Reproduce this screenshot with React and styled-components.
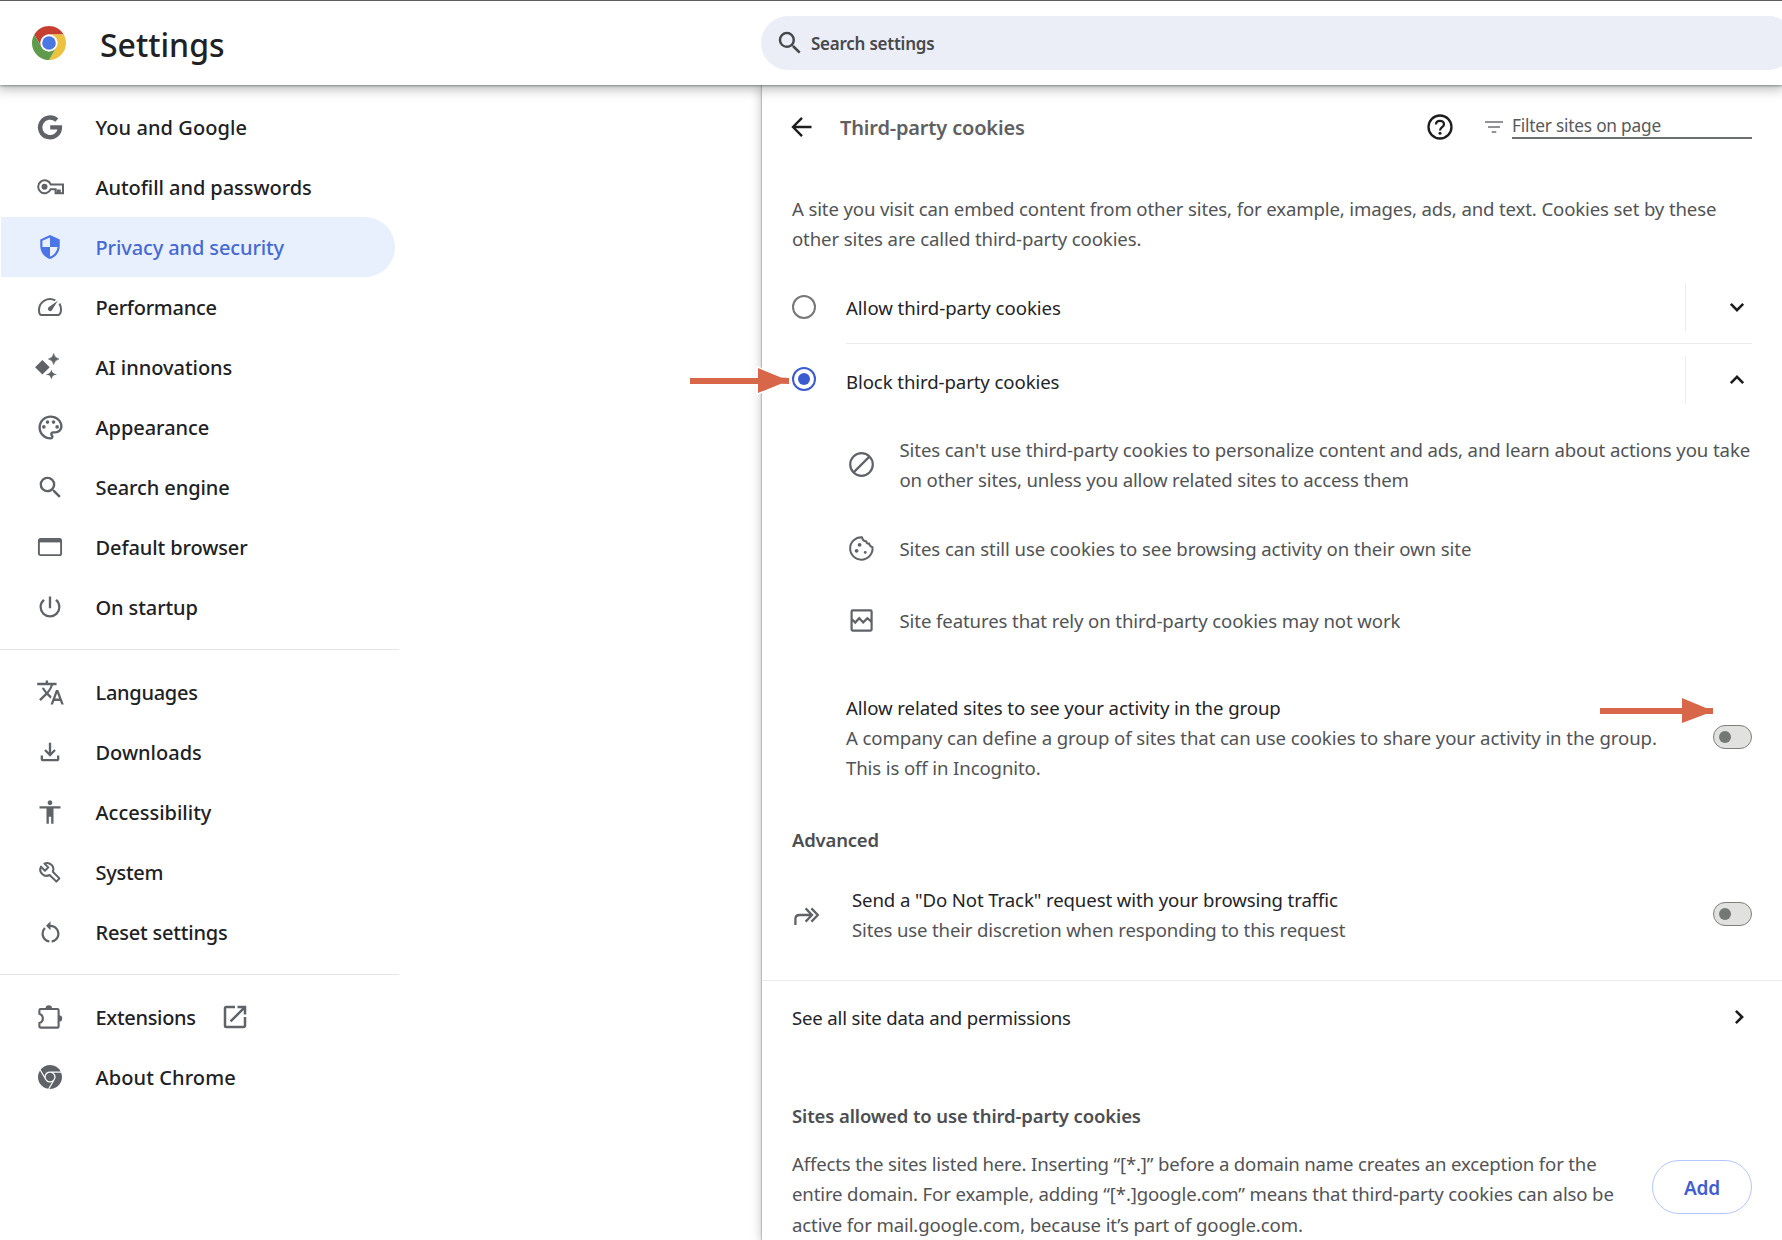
import React, {Component} from 'react'
import styled from "styled-components";
import { createGlobalStyle } from "styled-components";
import {
  MdSecurity, MdOutlinePalette, MdSearch, MdPowerSettingsNew, MdTranslate, MdOutlineFileDownload,
  MdAccessibility, MdRestartAlt, MdOpenInNew
} from "react-icons/md";
const GlobalStyle = createGlobalStyle `
*{
  margin: 0;
  padding: 0;
  box-sizing: border-box;
}
body{
  font-family: "Noto Sans", "Open Sans", sans-serif;
  background-color:#fff;
  overflow:hidden;
}
svg{
  display:block;
  flex-shrink:0;
  overflow:visible;
}
`
const Page = styled.div`
  width:100%;
  height:1240px;
  display:flex;
  flex-direction:column;
  overflow:hidden;
  position:relative;
`
const Header = styled.header`
  height:85px;
  flex-shrink:0;
  display:flex;
  align-items:center;
  border-top:1px solid #5f5f60;
  background-color:#fff;
  box-shadow:0 1px 2px rgba(40,48,44,0.4), 0 2px 11px 2px rgba(50,56,52,0.36);
  position:relative;
  z-index:2;
`
const Brand = styled.div`
  width:761px;
  padding-left:32px;
  display:flex;
  align-items:center;
  gap:34px;
  flex-shrink:0;
`
const BrandName = styled.h1`
  padding-top:3px;
  font-size:32px;
  line-height:44px;
  font-weight:500;
  color:#202124;
`
const SearchBox = styled.div`
  width:1034px;
  height:54px;
  flex-shrink:0;
  padding-left:14px;
  display:flex;
  align-items:center;
  gap:6px;
  border-radius:27px;
  background-color:#ebeef7;
  color:#47484b;
  font-size:17px;
  font-weight:600;
  letter-spacing:-0.24px;
`
const Body = styled.div`
  flex:1;
  display:flex;
`
const Sidebar = styled.nav`
  width:762px;
  flex-shrink:0;
  padding-top:12px;
`
const MenuItem = styled.div`
  width:394px;
  height:60px;
  margin-left:1px;
  padding-left:34px;
  display:flex;
  align-items:center;
  border-radius:0 30px 30px 0;
  background-color:${props => props.$active ? "#e9f0fd" : "transparent"};
  color:${props => props.$active ? "#4669d3" : "#202124"};
`
const MenuIcon = styled.span`
  width:30px;
  height:30px;
  margin-right:30.5px;
  display:flex;
  align-items:center;
  justify-content:center;
  color:${props => props.$active ? "#4b74e6" : "#5f6368"};
`
const MenuText = styled.span`
  font-size:20px;
  font-weight:500;
  letter-spacing:${props => props.$ls}px;
  margin-right:24px;
`
const MenuLine = styled.div`
  width:399px;
  height:1px;
  margin:12px 0;
  background-color:#e6e6e7;
`
const Panel = styled.main`
  flex:1;
  background-color:#fff;
  box-shadow:0 0 1px 1px rgba(0,0,0,0.16), 0 0 10px 1px rgba(0,0,0,0.22);
`
const PanelHead = styled.div`
  height:84px;
  padding:0 30px 0 28px;
  display:flex;
  align-items:center;
`
const PanelTitle = styled.h2`
  flex:1;
  margin-left:28px;
  font-size:20px;
  font-weight:600;
  letter-spacing:-0.17px;
  color:#5f6062;
`
const Filter = styled.div`
  width:240px;
  height:24px;
  margin:0 0 0 27px;
  padding-bottom:2px;
  display:flex;
  align-items:center;
  border-bottom:2px solid #6d6e71;
  font-size:17.3px;
  letter-spacing:-0.22px;
  color:#58595c;
`
const FilterIcon = styled.div`
  width:18px;
  margin:0 -18px 1px 32px;
`
const Intro = styled.p`
  padding:25px 30px 0;
  color:#525355;
`
/* one line of body text */
const Line = styled.span`
  display:block;
  font-size:18.6px;
  line-height:${props => props.$lh || 30}px;
  letter-spacing:${props => props.$ls}px;
  white-space:nowrap;
  color:${props => props.$dark ? "#232427" : "#525355"};
`
const OptionRow = styled.div`
  height:${props => props.$first ? 73 : 72}px;
  margin:${props => props.$first ? "17px" : "0"} 30px 0;
  display:flex;
  align-items:center;
`
const OptionBody = styled.div`
  flex:1;
  height:100%;
  margin-left:30px;
  display:flex;
  align-items:center;
  justify-content:space-between;
  border-bottom:${props => props.$line ? "1px solid #ececed" : "none"};
  ${Line}{
    padding-top:${props => props.$line ? 2 : 4}px;
  }
`
const Radio = styled.div`
  width:24px;
  height:24px;
  margin-bottom:2px;
  border-radius:50%;
  border:2.5px solid ${props => props.$checked ? "#3b5bd0" : "#767779"};
  display:flex;
  align-items:center;
  justify-content:center;
  &::after{
    content:"";
    width:12px;
    height:12px;
    border-radius:50%;
    background-color:${props => props.$checked ? "#3b5bd0" : "transparent"};
  }
`
const Expand = styled.div`
  width:67px;
  height:48px;
  padding-left:36px;
  display:flex;
  align-items:center;
  justify-content:center;
  border-left:1px solid #ececed;
`
const Detail = styled.div`
  height:${props => props.$tall ? 97 : 72}px;
  padding-left:86.5px;
  display:flex;
  align-items:center;
  gap:26px;
  svg{
    margin-bottom:${props => props.$tall ? 0 : 2}px;
  }
`
const SettingRow = styled.div`
  margin:${props => props.$space}px 30px 0 ${props => props.$left}px;
  display:flex;
  align-items:center;
  gap:32px;
`
const SettingText = styled.div`
  flex:1;
`
const Toggle = styled.div`
  width:39px;
  height:24px;
  padding-left:5px;
  margin-bottom:2px;
  display:flex;
  align-items:center;
  border-radius:12px;
  border:1.5px solid #7d7f7d;
  background-color:#e1e2e0;
  &::after{
    content:"";
    width:12px;
    height:12px;
    border-radius:50%;
    background-color:#747874;
  }
`
const Heading = styled.h3`
  margin:${props => props.$space}px 30px 0;
  font-size:18.5px;
  line-height:30px;
  font-weight:600;
  letter-spacing:${props => props.$ls}px;
  color:#4d4e51;
`
const LinkRow = styled.div`
  height:74px;
  margin-top:35px;
  padding:0 35px 0 30px;
  display:flex;
  align-items:center;
  justify-content:space-between;
  border-top:1px solid #ececed;
  svg{
    margin-bottom:2px;
  }
`
const Exceptions = styled.div`
  margin:18px 30px 0;
  display:flex;
  align-items:flex-start;
  justify-content:space-between;
`
const AddButton = styled.button`
  width:100px;
  height:54px;
  margin-top:11px;
  padding-top:2px;
  border-radius:27px;
  border:1.5px solid #b4c6fa;
  background-color:#fff;
  color:#3f5ed0;
  font-family:inherit;
  font-size:19px;
  font-weight:600;
  letter-spacing:-0.2px;
`
/* arrows drawn over the page */
const Pointer = styled.svg`
  position:absolute;
  z-index:3;
  left:${props => props.$x}px;
  top:${props => props.$y}px;
`
const ChromeLogo = () => (
  <svg width="34" height="34" viewBox="-17 -17 34 34">
    <path fill="#c63f31" d="M14.72-8.5A17 17 0 0 0-14.72-8.5L-7.36 4.25A8.5 8.5 0 0 1 0-8.5z"/>
    <path fill="#edc240" d="M14.72-8.5A17 17 0 0 1 0 17L7.36 4.25A8.5 8.5 0 0 0 0-8.5z"/>
    <path fill="#5f9b4a" d="M0 17A17 17 0 0 1-14.72-8.5L-7.36 4.25A8.5 8.5 0 0 0 7.36 4.25z"/>
    <circle r="8.5" fill="#fff"/>
    <circle r="6.8" fill="#4b77e5"/>
  </svg>
)
const IconG = () => (
  <svg width="24" height="24" viewBox="0 0 24 24" fill="none" stroke="currentColor" strokeWidth="4.4">
    <path d="M18.8 5.2A9.9 9.9 0 1 0 21.9 12.4H12.2"/>
  </svg>
)
const IconKey = () => (
  <svg width="27" height="16" viewBox="0 0 27 16" fill="none" stroke="currentColor" strokeWidth="2">
    <path d="M13.7 5.4A6.5 6.5 0 1 0 13.7 10.2H18.6V14.2H20.8V11.5H22.8V14.2H26V5.4z"/>
    <circle cx="7.5" cy="7.8" r="3" fill="currentColor" stroke="none"/>
  </svg>
)
const IconGauge = () => (
  <svg width="24" height="18" viewBox="0 0 24 18" fill="none" stroke="currentColor" strokeWidth="2">
    <path d="M17.3 2.4A11 11 0 0 0 1 12Q1 17 3.6 17H20.4Q23 16 23 11.5Q23 8 21.4 5.6"/>
    <path d="M19.8 2.8L13.9 12.3A2.3 2.3 0 1 1 10.5 9.2z" fill="currentColor" stroke="none"/>
  </svg>
)
const IconSpark = () => (
  <svg width="30" height="28" viewBox="0.6 0 30 28" fill="currentColor">
    <path d="M8 7L15.3 14.3L8 21.6L.7 14.3z"/>
    <path d="M19.3 0.5Q20.2 5.2 24.6 6Q20.2 6.8 19.3 11.5Q18.4 6.8 14 6Q18.4 5.2 19.3 .5z" stroke="currentColor" strokeWidth=".6"/>
    <path d="M17 18.8Q17.7 20.8 20 21.4Q17.7 22 17 24.2Q16.3 22 14 21.4Q16.3 20.8 17 18.8z" stroke="currentColor" strokeWidth="1.4"/>
  </svg>
)
const IconBrowser = () => (
  <svg width="24" height="18" viewBox="0 0 24 18" fill="none" stroke="currentColor" strokeWidth="1.9">
    <rect x=".9" y=".9" width="22.2" height="16.2" rx="1.6"/>
    <path d="M1 2.8H23" strokeWidth="3.2"/>
  </svg>
)
const IconWrench = () => (
  <svg width="22" height="21" viewBox="0 0 22 21" fill="none" stroke="currentColor" strokeWidth="2" strokeLinejoin="round">
    <path d="M2 4.6L5.9 8.8L9.3 5.4L5.4 1.6A6.3 6.3 0 0 1 13.8 9.8L20.4 16.4L17.4 19.6L10.6 13A6.3 6.3 0 0 1 2 4.6z"/>
  </svg>
)
const IconPuzzle = () => (
  <svg width="24" height="24" viewBox="0 0 24 24">
    <path d="M2.6 4H19.4Q20.6 4 20.6 5.2V21.4Q20.6 22.6 19.4 22.6H2.6Q1.4 22.6 1.4 21.4V18C6 16.6 6 10.2 1.4 8.8V5.2Q1.4 4 2.6 4z" fill="none" stroke="currentColor" strokeWidth="2.1"/>
    <path d="M7.6 3.4A3.2 3.2 0 0 1 14 3.4zM21 10.2A3.2 3.2 0 0 1 21 16.6z" fill="currentColor"/>
  </svg>
)
const IconChrome = () => (
  <svg width="24" height="24" viewBox="0 0 24 24" fill="currentColor">
    <path d="M12 0C8.21 0 4.831 1.757 2.632 4.501l3.953 6.848A5.454 5.454 0 0 1 12 6.545h10.691A12 12 0 0 0 12 0zM1.931 5.47A11.943 11.943 0 0 0 0 12c0 6.012 4.42 10.991 10.189 11.864l3.953-6.847a5.45 5.45 0 0 1-6.865-2.29zM15.273 7.636a5.446 5.446 0 0 1 1.45 7.09l-5.344 9.258c.206.01.413.016.621.016 6.627 0 12-5.373 12-12 0-1.54-.29-3.011-.818-4.364zM12 16.364a4.364 4.364 0 1 1 0-8.728 4.364 4.364 0 0 1 0 8.728z"/>
  </svg>
)
const IconBack = () => (
  <svg width="22" height="22" viewBox="0 0 22 22" fill="none" stroke="#1d1d1f" strokeWidth="2.4">
    <path d="M21.5 11H3.5M12 1.8L3 11L12 20.2"/>
  </svg>
)
const IconHelp = () => (
  <svg width="26" height="26" viewBox="0 0 26 26" fill="none" stroke="#1d1d1f" strokeWidth="2.3">
    <circle cx="13" cy="13" r="11.5"/>
    <path d="M9 10.4C9 5.6 17 5.8 17 10.2C17 13 13 13.2 13 16.4"/>
    <circle cx="13" cy="19.3" r="1.5" fill="#1d1d1f" stroke="none"/>
  </svg>
)
const IconFilter = () => (
  <svg width="18" height="12" viewBox="0 0 18 12" stroke="#6d6f74" strokeWidth="1.7">
    <path d="M0 1H18M3 6H15M6.7 11H11.3"/>
  </svg>
)
const Chevron = ({turn = 0}) => (
  <svg width="16" height="16" viewBox="-8 -8 16 16" fill="none" stroke="#1d1d1f" strokeWidth="2.6">
    <path d="M-6.2-3.1L0 3.1L6.2-3.1" transform={`rotate(${turn})`}/>
  </svg>
)
const IconBlock = () => (
  <svg width="25" height="25" viewBox="0 0 25 25" fill="none" stroke="#5f6368" strokeWidth="2.2">
    <circle cx="12.5" cy="12.5" r="11.3"/>
    <path d="M4.6 20.4L20.4 4.6"/>
  </svg>
)
const IconCookie = () => (
  <svg width="25" height="25" viewBox="0 0 25 25" fill="none" stroke="#5f6368" strokeWidth="2">
    <path d="M13 1.3A11.2 11.2 0 1 0 23.5 11.2Q20.6 10.4 20.2 7.6Q17.8 8 17.2 5.2Q13.8 5.4 13 1.3z" strokeLinejoin="round"/>
    <g fill="#5f6368" stroke="none">
      <circle cx="10.6" cy="8.8" r="1.9"/>
      <circle cx="7.6" cy="14.8" r="1.9"/>
      <circle cx="16.2" cy="16.4" r="1.4"/>
    </g>
  </svg>
)
const IconBroken = () => (
  <svg width="25" height="23" viewBox="0 0 25 23" fill="none" stroke="#5f6368" strokeWidth="2.2">
    <rect x="2.6" y="1.4" width="20" height="20.2" rx="1"/>
    <path d="M3 10.4L6.3 13.6L10.2 9.2L14.2 13.4L18.4 9.2L22.4 12.6"/>
  </svg>
)
const IconForward = () => (
  <svg width="26" height="16" viewBox="0 0 26 16" fill="none" stroke="#5f6368" strokeWidth="2.3">
    <path d="M1.4 18V12Q1.4 8 5.6 8H17M11.6 1.4L18 8L11.6 14.6M17.4 1.4L23.8 8L17.4 14.6"/>
  </svg>
)
class App extends Component{
  state={
    browserMenu:[
      {name:"You and Google", ls:0.08, icon:<IconG/>},
      {name:"Autofill and passwords", ls:-0.06, icon:<IconKey/>},
      {name:"Privacy and security", ls:-0.115, icon:<MdSecurity size={26}/>},
      {name:"Performance", ls:-0.27, icon:<IconGauge/>},
      {name:"AI innovations", ls:-0.03, icon:<IconSpark/>},
      {name:"Appearance", ls:-0.04, icon:<MdOutlinePalette size={29}/>},
      {name:"Search engine", ls:-0.1, icon:<MdSearch size={29}/>},
      {name:"Default browser", ls:-0.1, icon:<IconBrowser/>},
      {name:"On startup", ls:-0.1, icon:<MdPowerSettingsNew size={28}/>},
    ],
    systemMenu:[
      {name:"Languages", ls:-0.28, icon:<MdTranslate size={29}/>},
      {name:"Downloads", ls:0, icon:<MdOutlineFileDownload size={28}/>},
      {name:"Accessibility", ls:0, icon:<MdAccessibility size={28}/>},
      {name:"System", ls:-0.28, icon:<IconWrench/>},
      {name:"Reset settings", ls:-0.2, icon:<MdRestartAlt size={27}/>},
    ],
    aboutMenu:[
      {name:"Extensions", ls:-0.3, icon:<IconPuzzle/>, external:true},
      {name:"About Chrome", ls:0.1, icon:<IconChrome/>},
    ],
    selected:"Privacy and security",
    blocked:true,
  }

  renderMenu =(items)=>{
    return items.map(item => {
      const active = item.name === this.state.selected
      return (
        <MenuItem key={item.name} $active={active} onClick={() => this.setState({selected:item.name})}>
          <MenuIcon $active={active}>{item.icon}</MenuIcon>
          <MenuText $ls={item.ls}>{item.name}</MenuText>
          {item.external && <MdOpenInNew size={30} color="#5f6368"/>}
        </MenuItem>
      )
    })
  }
  render(){
    return(
      <Page>
        <GlobalStyle/>
        <Header>
          <Brand>
            <ChromeLogo/>
            <BrandName>Settings</BrandName>
          </Brand>
          <SearchBox>
            <MdSearch size={30}/>
            Search settings
          </SearchBox>
        </Header>
        <Body>
          <Sidebar>
            {this.renderMenu(this.state.browserMenu)}
            <MenuLine/>
            {this.renderMenu(this.state.systemMenu)}
            <MenuLine/>
            {this.renderMenu(this.state.aboutMenu)}
          </Sidebar>
          <Panel>
            <PanelHead>
              <IconBack/>
              <PanelTitle>Third-party cookies</PanelTitle>
              <IconHelp/>
              <FilterIcon><IconFilter/></FilterIcon>
              <Filter>Filter sites on page</Filter>
            </PanelHead>
            <Intro>
              <Line $ls={-0.137}>A site you visit can embed content from other sites, for example, images, ads, and text. Cookies set by these</Line>
              <Line $ls={-0.125}>other sites are called third-party cookies.</Line>
            </Intro>
            <OptionRow $first onClick={() => this.setState({blocked:false})}>
              <Radio $checked={!this.state.blocked}/>
              <OptionBody $line>
                <Line $dark $ls={-0.03}>Allow third-party cookies</Line>
                <Expand><Chevron/></Expand>
              </OptionBody>
            </OptionRow>
            <OptionRow onClick={() => this.setState({blocked:true})}>
              <Radio $checked={this.state.blocked}/>
              <OptionBody>
                <Line $dark $ls={-0.09}>Block third-party cookies</Line>
                <Expand><Chevron turn={180}/></Expand>
              </OptionBody>
            </OptionRow>
            <Detail $tall>
              <IconBlock/>
              <div>
                <Line $ls={-0.11}>Sites can't use third-party cookies to personalize content and ads, and learn about actions you take</Line>
                <Line $ls={-0.165}>on other sites, unless you allow related sites to access them</Line>
              </div>
            </Detail>
            <Detail>
              <IconCookie/>
              <Line $ls={-0.092}>Sites can still use cookies to see browsing activity on their own site</Line>
            </Detail>
            <Detail>
              <IconBroken/>
              <Line $ls={-0.11}>Site features that rely on third-party cookies may not work</Line>
            </Detail>
            <SettingRow $space={36} $left={84}>
              <SettingText>
                <Line $dark $ls={-0.08}>Allow related sites to see your activity in the group</Line>
                <Line $ls={-0.09}>A company can define a group of sites that can use cookies to share your activity in the group.</Line>
                <Line $ls={-0.12}>This is off in Incognito.</Line>
              </SettingText>
              <Toggle/>
            </SettingRow>
            <Heading $space={42} $ls={-0.2}>Advanced</Heading>
            <SettingRow $space={30} $left={32}>
              <IconForward/>
              <SettingText>
                <Line $dark $ls={-0.107}>Send a "Do Not Track" request with your browsing traffic</Line>
                <Line $ls={-0.165}>Sites use their discretion when responding to this request</Line>
              </SettingText>
              <Toggle/>
            </SettingRow>
            <LinkRow>
              <Line $dark $ls={-0.18}>See all site data and permissions</Line>
              <Chevron turn={-90}/>
            </LinkRow>
            <Heading $space={47} $ls={-0.12}>Sites allowed to use third-party cookies</Heading>
            <Exceptions>
              <div>
                <Line $lh={30.3} $ls={-0.17}>Affects the sites listed here. Inserting “[*.]” before a domain name creates an exception for the</Line>
                <Line $lh={30.3} $ls={-0.143}>entire domain. For example, adding “[*.]google.com” means that third-party cookies can also be</Line>
                <Line $lh={30.3} $ls={-0.125}>active for mail.google.com, because it’s part of google.com.</Line>
              </div>
              <AddButton>Add</AddButton>
            </Exceptions>
          </Panel>
        </Body>
        <Pointer $x={690} $y={366} width="100" height="29" viewBox="0 0 100 29">
          <path d="M0 12H68V2L91 11.6L99 12V18L91 17.8L68 27V18H0z" fill="#fff" stroke="#fff" strokeWidth="3"/>
          <path d="M0 12H68V2L91 11.6L99 12V18L91 17.8L68 27V18H0z" fill="#d76748"/>
        </Pointer>
        <Pointer $x={1600} $y={696} width="113" height="29" viewBox="0 0 113 29">
          <path d="M0 12H82V2L106 12H113V18H106L82 27V18H0z" fill="#d76748"/>
        </Pointer>
      </Page>
    )
  }
}

export default App;
